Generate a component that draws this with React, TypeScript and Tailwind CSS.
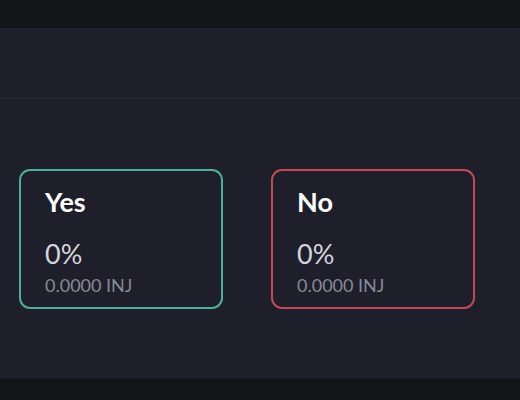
import React from "react";

type Outcome = {
  label: string;
  percent: string;
  amount: string;
  border: string;
};

const outcomes: Outcome[] = [
  { label: "Yes", percent: "0%", amount: "0.0000 INJ", border: "border-[#4fae9f]" },
  { label: "No", percent: "0%", amount: "0.0000 INJ", border: "border-[#c04a55]" },
];

const App: React.FC = () => {
  return (
    <div className="w-[520px] h-[400px] flex flex-col bg-[#141519] font-['Lato',sans-serif]">
      <div className="h-[28px] shrink-0 bg-[#141519]" />
      <div className="flex-1 flex flex-col bg-[#1e1f2b] border-t border-[#232430]">
        <div className="h-[70px] border-b-2 border-[#252633]" />
        <div className="flex gap-[48px] px-[19px] pt-[70px]">
          {outcomes.map((o) => (
            <div
              key={o.label}
              className={`w-[204px] h-[140px] rounded-[11px] border-2 ${o.border} px-[24px] pt-[14px]`}
            >
              <div className="text-[27px] font-bold text-white leading-[34px]">{o.label}</div>
              <div className="mt-[19px] text-[27px] text-[#d4d5dc] leading-[32px]">{o.percent}</div>
              <div className="mt-[3px] text-[18px] text-[#878a97] leading-[24px]">{o.amount}</div>
            </div>
          ))}
        </div>
      </div>
      <div className="h-[22px] shrink-0 bg-[#131418] border-t border-[#1a1b24]" />
    </div>
  );
};

export default App;
